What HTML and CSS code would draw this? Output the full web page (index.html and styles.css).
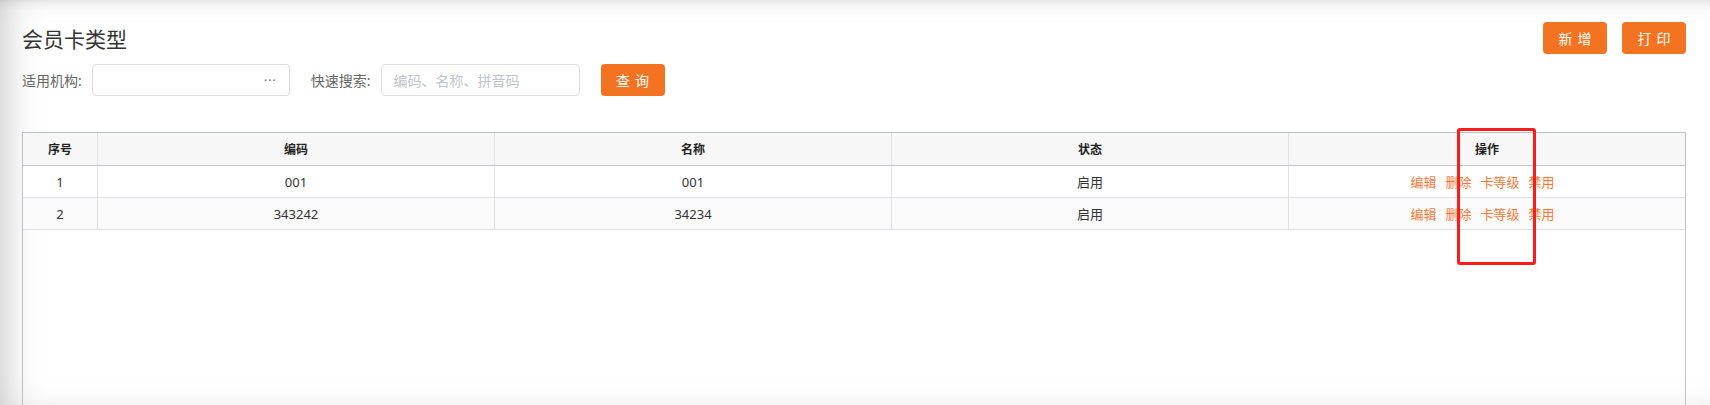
FILE: index.html
```html
<!DOCTYPE html>
<html lang="zh-CN">

<head>
    <meta charset="UTF-8">
    <meta name="viewport" content="width=device-width, initial-scale=1.0">
    <title>会员卡类型</title>
    <link rel="stylesheet" href="styles.css">
</head>

<body>

    <div class="page">
        <!-- 标题 + 按钮 -->
        <div class="toolbar">
            <h1 class="title">会员卡类型</h1>
            <div class="actions">
                <button type="button" class="btn">新增</button>
                <button type="button" class="btn">打印</button>
            </div>
        </div>

        <!-- 查询条件 -->
        <div class="filters">
            <div class="field">
                <span class="field-label">适用机构:</span>
                <div class="picker"><span class="picker-dots">···</span></div>
            </div>
            <div class="field">
                <span class="field-label">快速搜索:</span>
                <input type="text" class="text-input" placeholder="编码、名称、拼音码">
            </div>
            <button type="button" class="btn">查询</button>
        </div>

        <!-- 列表 -->
        <div class="grid-wrap">
            <table class="grid">
                <colgroup>
                    <col style="width: 74px">
                    <col style="width: 397px">
                    <col style="width: 397px">
                    <col style="width: 397px">
                    <col>
                </colgroup>
                <thead>
                    <tr>
                        <th>序号</th>
                        <th>编码</th>
                        <th>名称</th>
                        <th>状态</th>
                        <th>操作</th>
                    </tr>
                </thead>
                <tbody>
                    <tr>
                        <td>1</td>
                        <td>001</td>
                        <td>001</td>
                        <td>启用</td>
                        <td>
                            <div class="ops">
                                <a href="#">编辑</a>
                                <a href="#">删除</a>
                                <a href="#">卡等级</a>
                                <a href="#">禁用</a>
                            </div>
                        </td>
                    </tr>
                    <tr>
                        <td>2</td>
                        <td>343242</td>
                        <td>34234</td>
                        <td>启用</td>
                        <td>
                            <div class="ops">
                                <a href="#">编辑</a>
                                <a href="#">删除</a>
                                <a href="#">卡等级</a>
                                <a href="#">禁用</a>
                            </div>
                        </td>
                    </tr>
                </tbody>
            </table>
        </div>

        <!-- 标注框 -->
        <div class="mark"></div>
    </div>

</body>

</html>
```

FILE: styles.css
```css
/* Reset básico */
* {
    margin: 0;
    padding: 0;
    box-sizing: border-box;
    font-family: "Noto Sans", "Noto Sans CJK SC", sans-serif;
}

body {
    background: #fff;
    overflow: hidden;
}

/* Página com sombra interna */
.page {
    position: relative;
    width: 1710px;
    height: 405px;
    padding: 22px 24px 0 22px;
    background: #fff;
    box-shadow: inset 20px 0 40px -20px rgba(0, 0, 0, 0.28),
                inset 0 10px 12px -10px rgba(0, 0, 0, 0.12);
    overflow: hidden;
}

/* Título */
.toolbar {
    display: flex;
    align-items: center;
    justify-content: space-between;
    height: 32px;
}

.title {
    font-size: 21px;
    font-weight: normal;
    color: #333;
    line-height: 32px;
    padding-top: 2px;
}

.actions {
    display: flex;
    gap: 15px;
}

/* Botões laranja */
.btn {
    width: 64px;
    height: 32px;
    border: none;
    border-radius: 4px;
    background: #f47321;
    color: #fff;
    font-size: 14px;
    letter-spacing: 5px;
    padding-left: 5px;
    cursor: pointer;
}

.btn:hover {
    background: #e5661a;
}

/* Filtros */
.filters {
    display: flex;
    align-items: center;
    margin-top: 10px;
    height: 32px;
}

.field {
    display: flex;
    align-items: center;
    margin-right: 21px;
}

.field-label {
    font-size: 14px;
    color: #666;
    margin-right: 10px;
}

.picker,
.text-input {
    width: 198px;
    height: 32px;
    border: 1px solid #d9dce3;
    border-radius: 4px;
    background: #fff;
}

.picker {
    display: flex;
    align-items: center;
    justify-content: flex-end;
    padding-right: 12px;
}

.picker-dots {
    font-size: 12px;
    color: #666;
    letter-spacing: 1px;
}

.text-input {
    width: 199px;
    padding: 0 12px;
    font-size: 14px;
    color: #333;
    outline: none;
}

.text-input::placeholder {
    color: #c0c4cc;
}

/* Tabela */
.grid-wrap {
    margin-top: 36px;
    width: 1664px;
    height: 320px;
    border: 1px solid #bcc0c9;
    border-bottom: none;
}

.grid {
    width: 100%;
    table-layout: fixed;
    border-collapse: separate;
    border-spacing: 0;
}

.grid th,
.grid td {
    text-align: center;
    border-left: 1px solid #dfe2e8;
    color: #333;
}

.grid th:first-child,
.grid td:first-child {
    border-left: none;
}

.grid th {
    height: 33px;
    font-size: 12px;
    font-weight: bold;
    color: #222;
    background: #f7f7f7;
    border-bottom: 1px solid #c3c6ce;
}

.grid td {
    height: 32px;
    font-size: 13px;
    background: #fff;
    border-bottom: 1px solid #e0e1e8;
}

.grid tbody tr:nth-child(even) td {
    background: #fafafa;
}

/* Links de operação */
.ops {
    display: inline-flex;
}

.ops a {
    color: #f57a3a;
    text-decoration: none;
    font-size: 13px;
    margin-right: 9px;
}

/* Caixa vermelha de destaque */
.mark {
    position: absolute;
    left: 1457px;
    top: 128px;
    width: 79px;
    height: 137px;
    border: 3px solid #fb1c1c;
    border-radius: 3px;
}
```
